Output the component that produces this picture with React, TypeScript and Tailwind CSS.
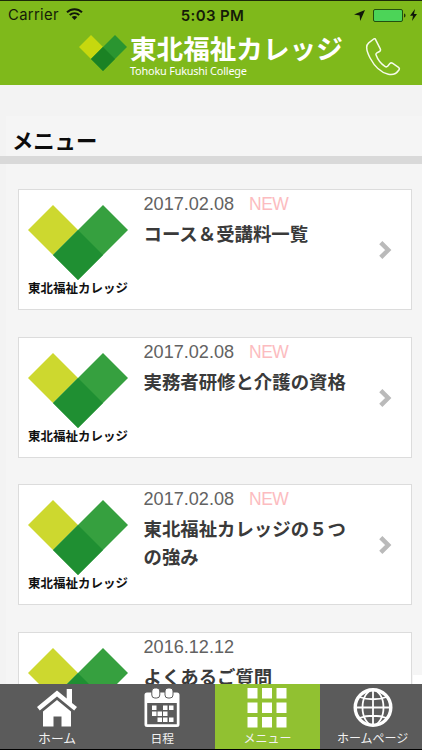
import React from "react";

type Item = { date: string; isNew: boolean; title: string };

const items: Item[] = [
  { date: "2017.02.08", isNew: true, title: "コース＆受講料一覧" },
  { date: "2017.02.08", isNew: true, title: "実務者研修と介護の資格" },
  { date: "2017.02.08", isNew: true, title: "東北福祉カレッジの５つの強み" },
  { date: "2016.12.12", isNew: false, title: "よくあるご質問" },
];

function Mark({ className, vivid }: { className: string; vivid?: boolean }) {
  return (
    <svg className={className} viewBox="0 0 100 75">
      <path d="M25 0 50 25 25 50 0 25z" fill={vivid ? "#c6d80e" : "#cdd82f"} />
      <path d="M75 0 100 25 50 75 25 50z" fill={vivid ? "#2a9530" : "#36a03f"} />
      <path d="M50 25 75 50 50 75 25 50z" fill={vivid ? "#1b8224" : "#1f8f32"} />
    </svg>
  );
}

function StatusBar() {
  return (
    <div className="grid h-7 grid-cols-[1fr_auto_1fr] items-center border-t border-[#1c2a08] pl-2 pr-[5px] pt-px font-['Inter','Liberation_Sans',sans-serif] text-[15px] leading-none text-[#151c08]">
      <div className="flex items-center gap-[7px]">
        <span className="text-[14.8px] tracking-[0.35px]">Carrier</span>
        <svg className="mb-0.5 h-3 w-[17px]" viewBox="0 0 17 12" fill="none" stroke="#10170a" strokeWidth="2">
          <path d="M1 4.3C5.2.2 11.8.2 16 4.3M3.7 7.1c2.8-2.6 6.8-2.6 9.6 0" />
          <path d="M8.5 12 5.7 9.1c1.6-1.4 4-1.4 5.6 0z" fill="#10170a" stroke="none" />
        </svg>
      </div>
      <span className="text-[15px] font-semibold tracking-[0.35px]">5:03 PM</span>
      <div className="flex items-center justify-end">
        <svg className="mr-2 h-[11px] w-[11px]" viewBox="0 0 11 11">
          <path d="M11 0 6.2 11 5.6 5.5 0 4.6z" fill="#10170a" />
        </svg>
        <svg className="mr-1 h-[13px] w-[33px]" viewBox="0 0 33 13">
          <rect x=".5" y=".5" width="29" height="12" rx="1.5" fill="#4cd458" stroke="#23500f" />
          <path d="M31 4.500c2 .5 2 3.500 0 4z" fill="#23370f" />
        </svg>
        <svg className="h-3 w-[7px]" viewBox="0 0 7 12">
          <path d="M5 0 0 6.800h3L2 12l5-7H4z" fill="#10170a" />
        </svg>
      </div>
    </div>
  );
}

function Header() {
  return (
    <header className="h-[84.5px] shrink-0 bg-[#7fb91b]">
      <StatusBar />
      <div className="flex pl-[79px] pt-[7px]">
        <Mark vivid className="h-[36px] w-[48px] shrink-0" />
        <div className="ml-[3px] w-[216px] whitespace-nowrap text-white">
          <div className="-mt-[2px] h-[31px] font-['Noto_Sans_CJK_JP',sans-serif] text-[26.6px] font-bold leading-[30px]">東北福祉カレッジ</div>
          <div className="font-['Noto_Sans','Open_Sans',sans-serif] text-[10.900px] font-normal leading-[13px] tracking-[-0.2px]">Tohoku Fukushi College</div>
        </div>
        <svg className="ml-[19px] mt-[3px] h-[38px] w-[36px]" viewBox="0 0 36 38" fill="none" stroke="#f5fbe9" strokeWidth="1.500" strokeLinejoin="round">
          <path d="M8.200 1.500 3.200 5.300C.4 7.600.8 13.300 4.600 20.500c4.200 8 11 14.600 18.200 16.200 4.600 1 8.200-.6 10.600-4.200.8-1.200.7-1.900-.4-2.700l-6.100-4.100c-1-.6-1.700-.5-2.500.4l-2.300 2.700c-.8.8-1.600.8-2.700.1-3.900-2.600-7.200-6.700-8.800-11.300-.4-1.100-.1-1.700.8-2.200l2.600-1.400c1-.6 1.200-1.200.9-2.300L10.200 2.400c-.4-1.300-1-1.600-2-.9z" transform="translate(.5 -.5)" />
        </svg>
      </div>
    </header>
  );
}

function Card({ item }: { item: Item }) {
  return (
    <article className="flex h-[121px] w-[394.500px] shrink-0 border border-[#dcdcdc] bg-white">
      <div className="ml-[9.500px] w-[100px] shrink-0 pt-[15px]">
        <Mark className="block h-[75px] w-[100px]" />
        <div className="whitespace-nowrap text-center font-['Noto_Sans_CJK_JP',sans-serif] text-[12.500px] font-bold leading-[16px] text-[#111]">東北福祉カレッジ</div>
      </div>
      <div className="ml-[15.500px] w-[208px] pt-[4px]">
        <div className="flex h-5 gap-[15px] font-['Liberation_Sans',sans-serif] text-[18.100px] leading-5 text-[#626262]">
          <span>{item.date}</span>
          {item.isNew && <span className="text-[17.500px] tracking-[-0.5px] text-[#fcbcc0]">NEW</span>}
        </div>
        <h2 className="mt-[5px] font-['Noto_Sans_CJK_JP',sans-serif] text-[18.400px] font-bold leading-[28px] text-[#3a3a3a]">{item.title}</h2>
      </div>
      <svg className="ml-[27px] mt-[51px] h-[19px] w-[13px]" viewBox="0 0 13 19" fill="none" stroke="#bababa" strokeWidth="4.500">
        <path d="M1.800 1.700 9.200 9 1.800 16.300" />
      </svg>
    </article>
  );
}

function HomeIcon() {
  return (
    <svg className="h-10 w-10" viewBox="0 0 40 40" fill="#fff">
      <path d="M20 2.500 0 19l2.800 3.500L20 8.500 37.200 22.500l2.800-3.500-5-4.100V1h-5.300v9.500z" />
      <path d="M6 23.500 20 12l14 11.500V38.500h-9.500V28.500h-8v10H6z" />
    </svg>
  );
}

function CalendarIcon() {
  return (
    <svg className="h-10 w-10" viewBox="0 0 40 40" fill="#fff">
      <path fillRule="evenodd" d="M5 4.500h30q2.500 0 2.500 2.500v29.500q0 2.500-2.500 2.500H5q-2.500 0-2.500-2.500V7q0-2.500 2.500-2.500zm.2 10.500v21.300h29.600V15z" />
      <g stroke="#5b5b5b">
        <rect x="9.800" y="0" width="8" height="10" rx="3" />
        <rect x="23" y="0" width="8" height="10" rx="3" />
      </g>
      <path d="M10 17.500h4.500V22H10zM21 17.500h4.500V22H21zM27 17.500h4.500V22H27zM10 23.500h4.500V28H10zM15.500 23.500H20V28h-4.500zM21 23.500h4.500V28H21zM15.500 29.500H20V34h-4.500zM21 29.500h4.500V34H21zM27 29.500h4.500V34H27z" />
    </svg>
  );
}

function GridIcon() {
  return (
    <svg className="h-10 w-10" viewBox="0 0 40 40" fill="#fff">
      <path d="M.5 0h10v10.500h-10zM15 0h10v10.500H15zM29.500 0h10v10.500h-10zM.5 14.500h10V25h-10zM15 14.500h10V25H15zM29.500 14.500h10V25h-10zM.5 29h10v10.500h-10zM15 29h10v10.500H15zM29.500 29h10v10.500h-10z" />
    </svg>
  );
}

function GlobeIcon() {
  return (
    <svg className="h-10 w-10" viewBox="0 0 40 40" fill="none" stroke="#fff" strokeWidth="1.800">
      <circle cx="20" cy="19.500" r="17.800" strokeWidth="3.400" />
      <ellipse cx="20" cy="19.500" rx="10.500" ry="17.500" />
      <path d="M20 2v35M2 19.500h36M6.500 9c8 3 19 3 27 0M6.500 30c8-3 19-3 27 0" />
    </svg>
  );
}

const tabs = [
  { label: "ホーム", Icon: HomeIcon, style: "", text: "text-[12.800px]" },
  { label: "日程", Icon: CalendarIcon, style: "", text: "text-[11.800px]" },
  { label: "メニュー", Icon: GridIcon, style: "bg-[#91c131]", text: "text-[12px]" },
  { label: "ホームページ", Icon: GlobeIcon, style: "", text: "text-[12px]" },
];

export default function App() {
  return (
    <div className="flex h-[750px] w-[422px] flex-col overflow-hidden bg-[#f3f3f3]">
      <Header />
      <main className="relative min-h-0 flex-1 overflow-hidden pt-[31px]">
        <h1 className="ml-1.5 h-[40.500px] bg-[#f5f5f5] pl-1.5 font-['Noto_Sans_CJK_JP',sans-serif] text-[21.300px] font-bold leading-[47px] text-[#0b0b0b]">メニュー</h1>
        <div className="h-2 bg-[#d9d9d9]" />
        <div className="ml-1.5 flex flex-col gap-[26.500px] bg-[#f5f5f5] pl-[11.500px] pt-[25px]">
          {items.map((item) => (
            <Card key={item.title} item={item} />
          ))}
        </div>
        <div className="absolute bottom-0 right-0 h-[9px] w-[9px] bg-white" />
      </main>
      <nav className="flex h-[66.500px] shrink-0 overflow-hidden border-b border-black bg-[#5b5b5b] pl-[4.500px]">
        {tabs.map(({ label, Icon, style, text }) => (
          <div key={label} className={`flex w-[105.200px] shrink-0 flex-col items-center pt-1 text-white ${style}`}>
            <Icon />
            <span className={`whitespace-nowrap font-['Noto_Sans_CJK_JP',sans-serif] leading-[20px] text-[#f2f2f2] ${text}`}>{label}</span>
          </div>
        ))}
      </nav>
    </div>
  );
}
